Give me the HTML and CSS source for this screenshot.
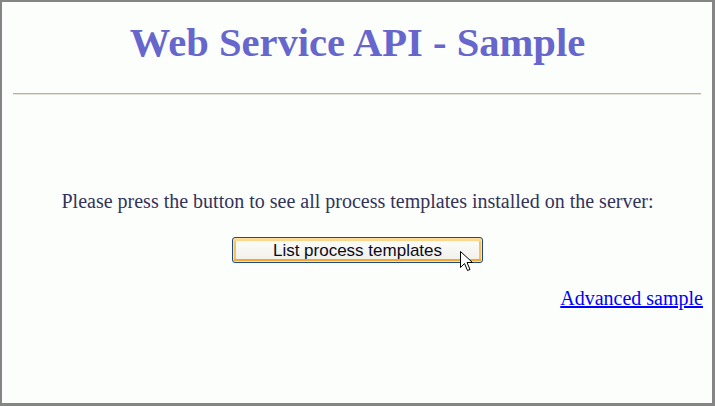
FILE: index.html
```html
<!DOCTYPE html>
<html>
<head>
<meta charset="utf-8">
<link rel="stylesheet" href="styles.css">
</head>
<body>
<div class="frame">
  <h1 class="title">Web Service API - Sample</h1>
  <hr class="rule">
  <div class="content">
    <p class="intro">Please press the button to see all process templates installed on the server:</p>
    <div class="btn-row">
      <span class="btn-wrap">
        <button class="btn" type="button">List process templates</button>
        <svg class="cursor" width="14" height="22" viewBox="0 0 14 22">
          <path d="M0.5 0.5 L0.5 16.5 L4.5 12.5 L7.5 19.5 L10 18.5 L7 11.5 L12.5 11.5 Z" fill="#fff" stroke="#000" stroke-width="1"/>
        </svg>
      </span>
    </div>
    <div class="link-row"><a href="#" class="adv">Advanced sample</a></div>
  </div>
</div>
</body>
</html>
```

FILE: styles.css
```css
html, body {
  margin: 0;
  padding: 0;
  height: 100%;
}
body {
  background: #fcfefc;
  font-family: "Liberation Serif", "Times New Roman", serif;
}
.frame {
  box-sizing: border-box;
  width: 715px;
  height: 406px;
  border-style: solid;
  border-color: #858585;
  border-width: 2px 3px 3px 2px;
  padding: 0 9px 0 10px;
  display: flex;
  flex-direction: column;
}
.title {
  margin: 17px 0 0;
  text-align: center;
  font-size: 40.6px;
  font-weight: bold;
  color: #6666cc;
  line-height: 48px;
}
.rule {
  margin: 26px 2px 0 1px;
  border: 0;
  height: 2px;
  background: linear-gradient(#b4b49c 50%, #e4e4d8 50%);
}
.content {
  display: flex;
  flex-direction: column;
  padding-top: 95px;
}
.intro {
  margin: 0;
  text-align: center;
  font-size: 20px;
  line-height: 22px;
  color: #33335a;
}
.btn-row {
  display: flex;
  justify-content: center;
  margin-top: 25px;
}
.btn-wrap {
  position: relative;
  display: block;
  height: 26px;
}
.btn {
  box-sizing: border-box;
  display: block;
  width: 251px;
  height: 26px;
  padding: 1px 0 0;
  font-family: "Liberation Sans", Arial, sans-serif;
  font-size: 17px;
  color: #0a0a1e;
  border: 1px solid #1c4b82;
  border-radius: 3px;
  background: linear-gradient(#fdfdfb, #f0efe8);
  box-shadow: inset 0 0 0 1px #ffe2a0, inset 0 2px 0 1px #ffd68a, inset 0 -2px 0 1px #f5a830, inset 2px 0 0 1px #fcc15a, inset -2px 0 0 1px #fcc15a;
}
.cursor {
  position: absolute;
  left: 228px;
  top: 14px;
}
.link-row {
  display: flex;
  justify-content: flex-end;
  margin-top: 24px;
}
.adv {
  font-size: 20px;
  color: #0000ff;
  text-decoration: underline;
  line-height: 22px;
}
```
